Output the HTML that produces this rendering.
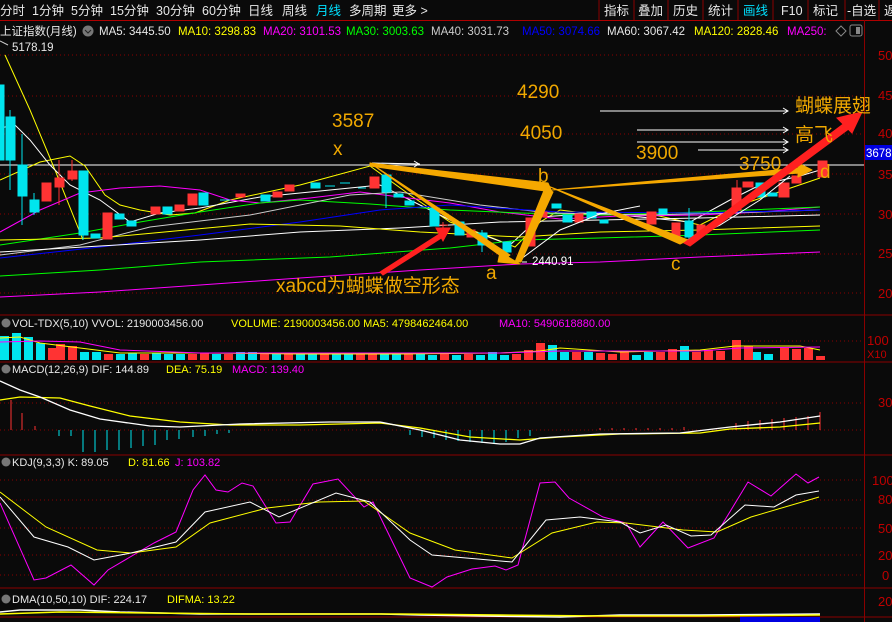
<!DOCTYPE html>
<html><head><meta charset="utf-8"><style>
html,body{margin:0;padding:0;background:#0a0a0a;width:892px;height:622px;overflow:hidden}
svg{display:block;font-family:"Liberation Sans","Noto Sans CJK SC",sans-serif}
</style></head><body>
<svg width="892" height="622" viewBox="0 0 892 622" xmlns="http://www.w3.org/2000/svg">
<rect width="892" height="622" fill="#0a0a0a"/>
<!-- toolbar -->
<g font-size="12.5" fill="#e8e8e8">
<text x="0" y="15">分时</text><text x="32" y="15">1分钟</text><text x="71" y="15">5分钟</text><text x="110" y="15">15分钟</text><text x="156" y="15">30分钟</text><text x="202" y="15">60分钟</text><text x="248" y="15">日线</text><text x="282" y="15">周线</text><text x="316" y="15" fill="#00e0ff">月线</text><text x="349" y="15">多周期</text><text x="392" y="15">更多 &gt;</text>
<text x="604" y="15">指标</text><text x="638" y="15">叠加</text><text x="673" y="15">历史</text><text x="708" y="15">统计</text><text x="743" y="15" fill="#00e0ff">画线</text><text x="781" y="15">F10</text><text x="813" y="15">标记</text><text x="847" y="15">-自选</text><text x="884" y="15">返</text>
</g>
<g stroke="#8a0000" stroke-width="1">
<line x1="599" y1="0" x2="599" y2="20"/><line x1="634" y1="0" x2="634" y2="20"/><line x1="668" y1="0" x2="668" y2="20"/><line x1="703" y1="0" x2="703" y2="20"/><line x1="738" y1="0" x2="738" y2="20"/><line x1="773" y1="0" x2="773" y2="20"/><line x1="808" y1="0" x2="808" y2="20"/><line x1="845" y1="0" x2="845" y2="20"/><line x1="879" y1="0" x2="879" y2="20"/>
<line x1="0" y1="20.5" x2="892" y2="20.5" stroke="#b00000"/>
<line x1="864.5" y1="20" x2="864.5" y2="622" stroke="#8a0000"/>
<line x1="0" y1="315" x2="892" y2="315"/><line x1="0" y1="362" x2="892" y2="362"/><line x1="0" y1="455" x2="892" y2="455"/><line x1="0" y1="588" x2="892" y2="588"/><line x1="0" y1="617" x2="892" y2="617"/>
</g>
<!-- info line -->
<g font-size="11.5">
<text x="0" y="35" fill="#e8e8e8">上证指数(月线)</text>
<circle cx="88" cy="31" r="5.5" fill="#777"/><path d="M85 30 l3 3 l3 -3" stroke="#222" fill="none"/>
<text x="99" y="35" fill="#e8e8e8">MA5: 3445.50</text>
<text x="178" y="35" fill="#ffff00">MA10: 3298.83</text>
<text x="263" y="35" fill="#ff00ff">MA20: 3101.53</text>
<text x="346" y="35" fill="#00ff00">MA30: 3003.63</text>
<text x="431" y="35" fill="#cccccc">MA40: 3031.73</text>
<text x="522" y="35" fill="#0000ff">MA50: 3074.66</text>
<text x="607" y="35" fill="#e8e8e8">MA60: 3067.42</text>
<text x="694" y="35" fill="#ffff00">MA120: 2828.46</text>
<text x="787" y="35" fill="#ff00ff">MA250:</text>
</g>
<path d="M836 31 l5 -5 l5 5 l-5 5z" stroke="#888" fill="none"/>
<rect x="850" y="25" width="12" height="11" rx="2" stroke="#888" fill="none"/><rect x="856" y="27" width="4" height="7" fill="#888"/>
<text x="12" y="51" font-size="11.5" fill="#e8e8e8">5178.19</text>
<path d="M0 41 l8 4" stroke="#ccc"/>
<!-- gridlines -->
<g stroke="#8a0000" stroke-dasharray="1 3">
<line x1="0" y1="55" x2="864" y2="55"/><line x1="0" y1="96" x2="864" y2="96"/><line x1="0" y1="134" x2="864" y2="134"/><line x1="0" y1="174" x2="864" y2="174"/><line x1="0" y1="214" x2="864" y2="214"/><line x1="0" y1="254" x2="864" y2="254"/><line x1="0" y1="293" x2="864" y2="293"/>
<line x1="0" y1="341" x2="864" y2="341"/><line x1="0" y1="403" x2="864" y2="403"/><line x1="0" y1="430" x2="864" y2="430"/>
<line x1="0" y1="480" x2="864" y2="480"/><line x1="0" y1="500" x2="864" y2="500"/><line x1="0" y1="528" x2="864" y2="528"/><line x1="0" y1="555" x2="864" y2="555"/><line x1="0" y1="575" x2="864" y2="575"/>
</g>
<g font-size="13" fill="#c00000">
<text x="878" y="60">50</text><text x="878" y="100">45</text><text x="878" y="138">40</text><text x="878" y="179">35</text><text x="878" y="219">30</text><text x="878" y="258">25</text><text x="878" y="298">20</text>
<text x="867" y="345">100</text><text x="867" y="358" font-size="11">X10</text><text x="878" y="407">30</text>
<text x="872" y="485">100</text><text x="878" y="504">80</text><text x="878" y="533">50</text><text x="878" y="560">20</text><text x="882" y="580">0</text><text x="878" y="606">20</text>
</g>
<rect x="865" y="145" width="27" height="15" fill="#0000e0"/><text x="866" y="157" font-size="11.5" fill="#fff">3678</text>
<line x1="0" y1="165" x2="864" y2="165" stroke="#fff"/>
<!-- MA lines -->
<g fill="none" stroke-width="1">
<polyline stroke="#ffff00" points="5,55 30,110 55,170 83,240"/>
<polyline stroke="#ffff00" points="0,180 40,162 70,156 85,166 105,195 120,205 140,210 170,215 195,213 230,200 300,185 370,166 410,195 450,222 485,235 515,247 540,222 560,210 600,215 650,214 700,225 740,205 770,195 820,178"/>
<polyline stroke="#ffffff" points="0,128 15,125 30,140 50,165 70,185 100,200 130,222 160,213 200,208 260,197 330,190 380,185 420,205 470,230 510,245 540,217 600,213 690,222 730,200 760,185 800,176 820,170"/>
<polyline stroke="#ff00ff" points="0,232 40,210 80,193 120,188 160,186 200,190 230,200 260,203 310,198 360,192 400,197 450,203 500,212 560,219 620,216 700,215 760,212 820,207"/>
<polyline stroke="#00ff00" points="0,245 80,233 140,222 200,212 260,203 300,200 370,204 450,210 520,213 600,215 700,212 820,207"/>
<polyline stroke="#cccccc" points="0,255 80,245 150,227 250,215 350,195 400,192 480,205 550,213 650,215 760,212 820,210"/>
<polyline stroke="#0000ff" points="0,258 100,247 200,235 300,222 380,210 450,205 560,212 700,213 820,210"/>
<polyline stroke="#ffffff" points="0,252 100,246 200,240 300,232 400,228 500,222 600,220 700,218 820,215"/>
<polyline stroke="#ffff00" points="0,240 100,238 250,224 340,226 420,232 520,237 600,232 700,230 820,226"/>
<polyline stroke="#00ff00" points="0,276 100,270 200,262 330,257 450,248 520,240 600,238 700,235 820,230"/>
<polyline stroke="#ff00ff" points="0,297 100,292 200,285 300,278 420,270 520,264 600,262 700,257 820,252"/>
</g>
<!-- candles -->
<g stroke-width="1">
<g fill="#00e5ee" stroke="#00e5ee">
<rect x="0" y="85" width="4" height="75"/>
<line x1="10" y1="110" x2="10" y2="190"/><rect x="6" y="117" width="9" height="43"/>
<line x1="22" y1="134" x2="22" y2="225"/><rect x="18" y="165" width="9" height="31"/>
<line x1="34" y1="193" x2="34" y2="215"/><rect x="30" y="200" width="9" height="12"/>
<line x1="83" y1="171" x2="83" y2="240"/><rect x="79" y="171" width="9" height="64"/>
<rect x="91" y="234" width="9" height="4"/><rect x="115" y="214" width="9" height="5"/><rect x="127" y="221" width="9" height="5"/>
<rect x="163" y="207" width="9" height="7"/><rect x="199" y="193" width="9" height="12"/><rect x="261" y="195" width="9" height="6"/>
<rect x="311" y="183" width="9" height="5"/>
<line x1="386" y1="175" x2="386" y2="208"/><rect x="382" y="175" width="9" height="17"/>
<rect x="394" y="194" width="9" height="3"/><rect x="405" y="201" width="9" height="4"/>
<rect x="430" y="208" width="9" height="18"/><rect x="455" y="222" width="9" height="13"/>
<line x1="482" y1="230" x2="482" y2="252"/><rect x="478" y="233" width="9" height="12"/>
<rect x="503" y="242" width="8" height="10"/>
<rect x="552" y="204" width="9" height="4"/><rect x="563" y="215" width="9" height="7"/><rect x="587" y="212" width="9" height="6"/>
<rect x="600" y="220" width="8" height="3"/><rect x="659" y="209" width="8" height="5"/>
<line x1="689" y1="208" x2="689" y2="240"/><rect x="685" y="221" width="8" height="16"/>
<rect x="756" y="183" width="9" height="14"/><rect x="768" y="193" width="9" height="3"/>
</g>
<g fill="#ff3333" stroke="#ff3333">
<rect x="42" y="183" width="9" height="18"/>
<line x1="59" y1="160" x2="59" y2="205"/><rect x="55" y="178" width="9" height="9"/>
<line x1="72" y1="160" x2="72" y2="181"/><rect x="68" y="171" width="9" height="8"/>
<rect x="103" y="213" width="9" height="26"/><rect x="151" y="207" width="9" height="7"/><rect x="175" y="205" width="9" height="6"/>
<rect x="188" y="194" width="9" height="11"/><rect x="236" y="194" width="9" height="3"/><rect x="273" y="192" width="9" height="5"/><rect x="285" y="185" width="9" height="6"/>
<rect x="370" y="177" width="9" height="11"/>
<line x1="443" y1="222" x2="443" y2="238"/><line x1="439" y1="225" x2="448" y2="225"/>
<rect x="467" y="230" width="8" height="7"/>
<rect x="526" y="218" width="9" height="28"/><rect x="540" y="212" width="7" height="5"/>
<rect x="575" y="214" width="8" height="8"/><rect x="647" y="212" width="9" height="12"/>
<rect x="672" y="223" width="8" height="14"/><rect x="697" y="225" width="8" height="8"/>
<line x1="737" y1="180" x2="737" y2="212"/><rect x="732" y="188" width="9" height="22"/>
<rect x="743" y="182" width="10" height="5"/><rect x="779" y="183" width="10" height="14"/>
<rect x="792" y="176" width="9" height="7"/><rect x="818" y="161" width="9" height="16"/>
</g>
<g stroke="#00e5ee"><line x1="220" y1="200" x2="230" y2="200"/><line x1="325" y1="186" x2="335" y2="186"/><line x1="340" y1="183" x2="350" y2="183"/><line x1="358" y1="188" x2="366" y2="188"/></g>
</g>
<!-- white arrows -->
<g stroke="#fff" fill="none">
<line x1="600" y1="111" x2="788" y2="111"/><path d="M783 108 l5 3 l-5 3"/>
<line x1="637" y1="130" x2="788" y2="130"/><path d="M783 127 l5 3 l-5 3"/>
<line x1="637" y1="142" x2="788" y2="142"/><path d="M783 139 l5 3 l-5 3"/>
<line x1="698" y1="150" x2="788" y2="150"/><path d="M783 147 l5 3 l-5 3"/>
<line x1="372" y1="163" x2="420" y2="164"/><path d="M414 161 l5 3 l-5 3"/>
<polyline points="517,262 560,230 600,214 640,206"/><polyline points="683,242 720,225 760,200 790,176"/>
<text x="532" y="265" font-size="11.5" fill="#fff" stroke="none">2440.91</text>
<path d="M527 262 l-5 0" />
</g>
<!-- orange pattern -->
<g fill="#f5a800" stroke="#f5a800" stroke-linejoin="round">
<path d="M370 163 L548 183 L552 192 L370 166Z"/>
<path d="M370 163 L510 255 L505 259Z"/>
<path d="M500 252 L520 264 L498 262Z"/>
<path d="M515 262 L545 188 L553 192 L521 262Z"/>
<path d="M548 186 L688 240 L680 244Z"/>
<path d="M552 190 L800 168 L800 173Z"/>
<path d="M798 163 L812 170 L798 177Z"/>
</g>
<g stroke="#ff2020" fill="#ff2020">
<path d="M380 272 L441 233 L443 237 L383 275Z"/><path d="M436 228 L450 228 L443 241Z"/>
<path d="M684 243 L846 122 L850 128 L690 246Z"/><path d="M837 118 L862 112 L852 133Z"/>
</g>
<g fill="#f0a800" font-size="19">
<text x="332" y="127">3587</text><text x="333" y="155">x</text>
<text x="517" y="98">4290</text><text x="520" y="139">4050</text><text x="636" y="159">3900</text><text x="739" y="170">3750</text>
<text x="538" y="182">b</text><text x="486" y="279">a</text><text x="671" y="270">c</text><text x="820" y="178">d</text>
<text x="276" y="292">xabcd为蝴蝶做空形态</text>
<text x="795" y="112">蝴蝶展翅</text><text x="795" y="141">高飞</text>
</g>
<!-- volume -->
<g font-size="11">
<circle cx="6" cy="323" r="4.5" fill="#777"/>
<text x="12" y="327" fill="#e8e8e8">VOL-TDX(5,10) VVOL: 2190003456.00</text>
<text x="231" y="327" fill="#ffff00">VOLUME: 2190003456.00 MA5: 4798462464.00</text>
<text x="499" y="327" fill="#ff00ff">MA10: 5490618880.00</text>
</g>
<g fill="#00e5ee">
<rect x="0" y="336" width="9" height="24"/><rect x="12" y="333" width="9" height="27"/><rect x="24" y="337" width="9" height="23"/><rect x="36" y="343" width="9" height="17"/>
<rect x="80" y="352" width="9" height="8"/><rect x="92" y="352" width="9" height="8"/><rect x="116" y="354" width="9" height="6"/><rect x="128" y="353" width="9" height="7"/><rect x="152" y="353" width="9" height="7"/><rect x="164" y="354" width="9" height="6"/><rect x="176" y="354" width="9" height="6"/><rect x="212" y="354" width="9" height="6"/><rect x="236" y="352" width="9" height="8"/><rect x="248" y="352" width="9" height="8"/><rect x="272" y="353" width="9" height="7"/><rect x="296" y="354" width="9" height="6"/><rect x="308" y="354" width="9" height="6"/><rect x="332" y="354" width="9" height="6"/><rect x="344" y="353" width="9" height="7"/><rect x="380" y="353" width="9" height="7"/><rect x="392" y="353" width="9" height="7"/><rect x="416" y="354" width="9" height="6"/><rect x="428" y="355" width="9" height="5"/><rect x="452" y="355" width="9" height="5"/><rect x="476" y="355" width="9" height="5"/><rect x="488" y="352" width="9" height="8"/><rect x="500" y="355" width="9" height="5"/><rect x="548" y="345" width="9" height="15"/><rect x="560" y="352" width="9" height="8"/><rect x="584" y="352" width="9" height="8"/><rect x="632" y="355" width="9" height="5"/><rect x="644" y="352" width="9" height="8"/><rect x="680" y="346" width="9" height="14"/><rect x="752" y="352" width="9" height="8"/><rect x="764" y="354" width="9" height="6"/>
</g>
<g fill="#ff3333">
<rect x="48" y="348" width="9" height="12"/><rect x="56" y="344" width="9" height="16"/><rect x="68" y="346" width="9" height="14"/><rect x="104" y="354" width="9" height="6"/><rect x="140" y="354" width="9" height="6"/><rect x="188" y="354" width="9" height="6"/><rect x="200" y="353" width="9" height="7"/><rect x="224" y="354" width="9" height="6"/><rect x="260" y="353" width="9" height="7"/><rect x="284" y="354" width="9" height="6"/><rect x="320" y="354" width="9" height="6"/><rect x="356" y="353" width="9" height="7"/><rect x="368" y="354" width="9" height="6"/><rect x="404" y="354" width="9" height="6"/><rect x="440" y="354" width="9" height="6"/><rect x="464" y="354" width="9" height="6"/><rect x="512" y="354" width="9" height="6"/><rect x="524" y="350" width="9" height="10"/><rect x="536" y="343" width="9" height="17"/><rect x="572" y="352" width="9" height="8"/><rect x="596" y="353" width="9" height="7"/><rect x="608" y="354" width="9" height="6"/><rect x="620" y="352" width="9" height="8"/><rect x="656" y="352" width="9" height="8"/><rect x="668" y="349" width="9" height="11"/><rect x="692" y="352" width="9" height="8"/><rect x="704" y="350" width="9" height="10"/><rect x="716" y="351" width="9" height="9"/><rect x="732" y="340" width="9" height="20"/><rect x="744" y="346" width="9" height="14"/><rect x="780" y="348" width="9" height="12"/><rect x="792" y="349" width="9" height="11"/><rect x="804" y="348" width="9" height="12"/><rect x="816" y="356" width="9" height="4"/>
</g>
<polyline fill="none" stroke="#ffff00" points="0,338 20,337 40,343 80,348 120,353 200,353 300,354 400,354 500,353 540,351 560,348 620,352 700,350 735,346 800,346 820,350"/>
<polyline fill="none" stroke="#ff00ff" points="0,342 40,341 80,342 120,350 200,353 300,353 400,353 500,353 560,351 700,351 740,348 820,347"/>
<!-- MACD -->
<g font-size="11">
<circle cx="6" cy="369" r="4.5" fill="#777"/>
<text x="12" y="373" fill="#e8e8e8">MACD(12,26,9) DIF: 144.89</text>
<text x="166" y="373" fill="#ffff00">DEA: 75.19</text>
<text x="232" y="373" fill="#ff00ff">MACD: 139.40</text>
</g>
<g stroke="#ff3333">
<line x1="11" y1="400" x2="11" y2="430"/><line x1="22" y1="413" x2="22" y2="430"/><line x1="35" y1="426" x2="35" y2="430"/>
<line x1="600" y1="428" x2="600" y2="430"/><line x1="612" y1="428" x2="612" y2="430"/><line x1="624" y1="428" x2="624" y2="430"/><line x1="636" y1="428" x2="636" y2="430"/><line x1="648" y1="428" x2="648" y2="430"/><line x1="660" y1="428" x2="660" y2="430"/><line x1="672" y1="428" x2="672" y2="430"/><line x1="684" y1="427" x2="684" y2="430"/>
<line x1="736" y1="423" x2="736" y2="430"/><line x1="748" y1="421" x2="748" y2="430"/><line x1="760" y1="420" x2="760" y2="430"/><line x1="772" y1="419" x2="772" y2="430"/><line x1="784" y1="418" x2="784" y2="430"/><line x1="796" y1="417" x2="796" y2="430"/><line x1="808" y1="416" x2="808" y2="430"/><line x1="820" y1="412" x2="820" y2="430"/>
</g>
<g stroke="#00e5ee">
<line x1="59" y1="430" x2="59" y2="436"/><line x1="71" y1="430" x2="71" y2="436"/><line x1="83" y1="430" x2="83" y2="452"/><line x1="95" y1="430" x2="95" y2="452"/><line x1="107" y1="430" x2="107" y2="450"/><line x1="119" y1="430" x2="119" y2="450"/><line x1="131" y1="430" x2="131" y2="448"/><line x1="143" y1="430" x2="143" y2="446"/><line x1="155" y1="430" x2="155" y2="445"/><line x1="167" y1="430" x2="167" y2="440"/><line x1="179" y1="430" x2="179" y2="439"/><line x1="193" y1="430" x2="193" y2="437"/><line x1="205" y1="430" x2="205" y2="436"/><line x1="217" y1="430" x2="217" y2="434"/><line x1="229" y1="430" x2="229" y2="433"/>
<line x1="410" y1="430" x2="410" y2="435"/><line x1="422" y1="430" x2="422" y2="437"/><line x1="434" y1="430" x2="434" y2="438"/><line x1="446" y1="430" x2="446" y2="440"/><line x1="458" y1="430" x2="458" y2="441"/><line x1="470" y1="430" x2="470" y2="442"/><line x1="482" y1="430" x2="482" y2="443"/><line x1="494" y1="430" x2="494" y2="444"/><line x1="506" y1="430" x2="506" y2="442"/><line x1="518" y1="430" x2="518" y2="438"/><line x1="530" y1="430" x2="530" y2="436"/>
</g>
<polyline fill="none" stroke="#ffff00" stroke-width="1.3" points="0,400 20,397 60,398 90,406 130,416 180,422 230,425 300,425 380,423 420,428 470,437 520,440 560,437 620,434 700,433 730,429 780,427 820,423"/>
<polyline fill="none" stroke="#ffffff" stroke-width="1.3" points="0,381 20,390 40,397 70,410 100,419 150,426 180,427 240,424 330,422 380,422 420,430 460,440 500,444 520,444 540,438 600,434 680,433 730,427 780,422 820,416"/>
<!-- KDJ -->
<g font-size="11">
<circle cx="6" cy="462" r="4.5" fill="#777"/>
<text x="12" y="466" fill="#e8e8e8">KDJ(9,3,3) K: 89.05</text>
<text x="128" y="466" fill="#ffff00">D: 81.66</text>
<text x="175" y="466" fill="#ff00ff">J: 103.82</text>
</g>
<polyline fill="none" stroke="#ff00ff" points="0,503 34,580 46,578 71,565 94,585 108,570 154,543 176,532 193,490 205,475 216,490 228,492 242,483 253,486 276,523 290,522 313,484 338,479 364,507 373,502 410,578 432,587 447,577 472,569 495,566 506,570 518,565 540,483 555,482 569,498 603,517 626,523 640,547 663,522 688,548 714,538 748,482 771,496 796,474 808,483 819,477"/>
<polyline fill="none" stroke="#ffff00" points="0,492 46,527 97,550 131,553 176,547 210,523 267,508 319,502 364,501 410,533 455,550 512,558 552,533 597,522 626,523 683,530 717,532 751,517 819,497"/>
<polyline fill="none" stroke="#ffffff" points="0,497 34,537 68,547 94,560 131,553 176,542 205,512 250,502 279,517 336,493 370,502 410,540 432,555 512,562 546,520 580,517 620,522 640,533 666,525 691,536 711,535 745,505 774,507 796,495 819,491"/>
<!-- DMA -->
<g font-size="11">
<circle cx="6" cy="599" r="4.5" fill="#777"/>
<text x="12" y="603" fill="#e8e8e8">DMA(10,50,10) DIF: 224.17</text>
<text x="167" y="603" fill="#ffff00">DIFMA: 13.22</text>
</g>
<polyline fill="none" stroke="#ffffff" stroke-width="1.5" points="0,612 20,610 80,610 120,612 200,614 380,614 420,615 480,616 560,617 620,615 700,615 820,614"/>
<polyline fill="none" stroke="#ffff00" stroke-width="1.5" points="0,614 60,612 150,613 250,614 400,614 500,615 600,616 700,616 820,615"/>
<rect x="740" y="617" width="80" height="5" fill="#0000e0"/>
</svg>
</body></html>
